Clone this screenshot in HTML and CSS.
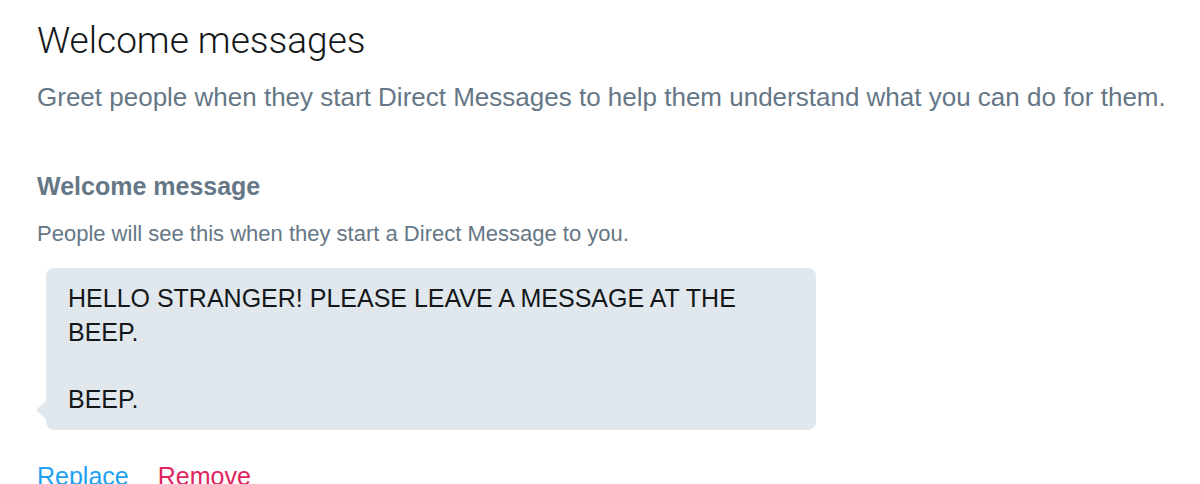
FILE: index.html
```html
<!DOCTYPE html>
<html lang="en">
<head>
<meta charset="utf-8">
<title>Welcome messages</title>
<link rel="stylesheet" href="styles.css">
</head>
<body>
<main class="page">
  <h1 class="title">Welcome messages</h1>
  <p class="lead">Greet people when they start Direct Messages to help them understand what you can do for them.</p>
  <section class="section">
    <h2 class="section-title">Welcome message</h2>
    <p class="section-desc">People will see this when they start a Direct Message to you.</p>
    <div class="bubble">
      <p class="bubble-text">HELLO STRANGER! PLEASE LEAVE A MESSAGE AT THE BEEP.<br><br>BEEP.</p>
      <svg class="bubble-tail" width="11" height="20" viewBox="0 0 11 20" aria-hidden="true"><path d="M11 0 L1.6 8.4 Q0 10 1.6 11.6 L11 20 Z" fill="#e1e8ed"/></svg>
    </div>
    <div class="actions">
      <a class="action action-replace" href="#">Replace</a>
      <a class="action action-remove" href="#">Remove</a>
    </div>
  </section>
</main>
</body>
</html>
```

FILE: styles.css
```css
html, body {
  margin: 0;
  padding: 0;
  background: #ffffff;
}
body {
  font-family: "Liberation Sans", Arial, sans-serif;
  color: #14171a;
}
.page {
  padding: 19px 0 0 37px;
  overflow: hidden;
  height: 465px;
}
.title {
  margin: 0;
  font-family: Roboto, "Liberation Sans", sans-serif;
  font-weight: 300;
  font-size: 37px;
  line-height: 44px;
  color: #14171a;
}
.lead {
  margin: 19px 0 0;
  font-size: 26px;
  line-height: 30px;
  color: #657786;
}
.section {
  margin-top: 59px;
}
.section-title {
  margin: 0;
  font-size: 25px;
  line-height: 30px;
  font-weight: bold;
  color: #657786;
}
.section-desc {
  margin: 19px 0 0;
  font-size: 22px;
  line-height: 28px;
  color: #657786;
}
.bubble {
  position: relative;
  margin: 20px 0 0 9px;
  width: 770px;
  box-sizing: border-box;
  padding: 14px 22px 14px;
  background: #e1e8ed;
  border-radius: 8px;
}
.bubble-text {
  margin: 0;
  font-size: 25px;
  line-height: 33.5px;
  color: #14171a;
}
.bubble-tail {
  position: absolute;
  left: -10px;
  bottom: 10px;
}
.actions {
  display: flex;
  gap: 29px;
  margin-top: 31px;
}
.action {
  font-size: 25px;
  line-height: 30px;
  text-decoration: none;
}
.action-replace { color: #1da1f2; }
.action-remove { color: #e0245e; }
```
